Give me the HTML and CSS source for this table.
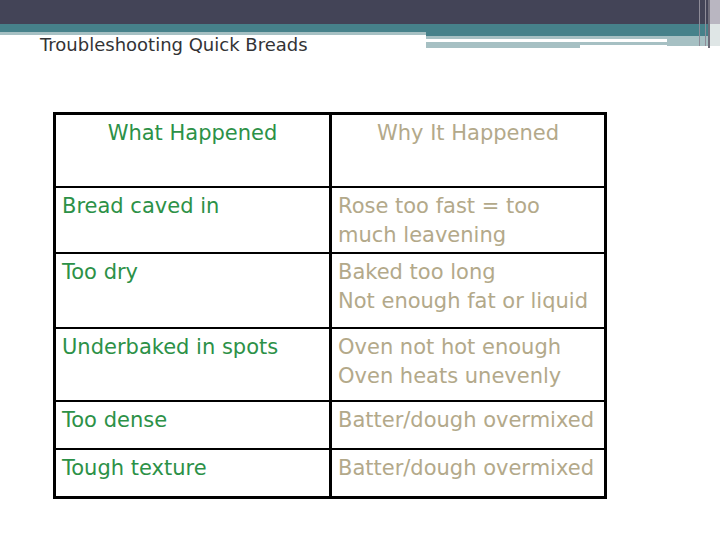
FILE: index.html
```html
<!DOCTYPE html>
<html>
<head>
<meta charset="utf-8">
<link rel="stylesheet" href="styles.css">
</head>
<body>
<div class="header">
  <h1 class="title">Troubleshooting Quick Breads</h1>
</div>
<table class="grid">
  <tr class="r-head">
    <th class="what">What Happened</th>
    <th class="why">Why It Happened</th>
  </tr>
  <tr class="r1">
    <td class="what">Bread caved in</td>
    <td class="why">Rose too fast = too<br>much leavening</td>
  </tr>
  <tr class="r2">
    <td class="what">Too dry</td>
    <td class="why">Baked too long<br>Not enough fat or liquid</td>
  </tr>
  <tr class="r3">
    <td class="what">Underbaked in spots</td>
    <td class="why">Oven not hot enough<br>Oven heats unevenly</td>
  </tr>
  <tr class="r4">
    <td class="what">Too dense</td>
    <td class="why">Batter/dough overmixed</td>
  </tr>
  <tr class="r5">
    <td class="what">Tough texture</td>
    <td class="why">Batter/dough overmixed</td>
  </tr>
</table>
</body>
</html>
```
FILE: styles.css
```css
html, body {
  margin: 0;
  padding: 0;
  background: #ffffff;
}
body {
  width: 720px;
  height: 540px;
  overflow: hidden;
  font-family: "DejaVu Sans", sans-serif;
}
.header {
  height: 60px;
  background:
    linear-gradient(#b9b6c1, #b9b6c1) 710px 0 / 10px 24px no-repeat,
    linear-gradient(#dfe6e6, #dfe6e6) 710px 24px / 10px 22px no-repeat,
    linear-gradient(#8e8c98, #8e8c98) 699px 0 / 1px 46px no-repeat,
    linear-gradient(#8e8c98, #8e8c98) 705px 0 / 1px 46px no-repeat,
    linear-gradient(#6f6d7a, #6f6d7a) 708px 0 / 2px 48px no-repeat,
    linear-gradient(#434457, #434457) 0 0 / 710px 24px no-repeat,
    linear-gradient(#46818a, #46818a) 0 24px / 710px 8px no-repeat,
    linear-gradient(#46818a, #46818a) 426px 32px / 284px 4px no-repeat,
    linear-gradient(#a6c0c3, #a6c0c3) 0 32px / 426px 3px no-repeat,
    linear-gradient(#a6c0c3, #a6c0c3) 426px 36px / 241px 3px no-repeat,
    linear-gradient(#a6c0c3, #a6c0c3) 667px 36px / 43px 10px no-repeat,
    linear-gradient(#a6c0c3, #a6c0c3) 426px 42px / 154px 6px no-repeat,
    linear-gradient(#a6c0c3, #a6c0c3) 580px 42px / 87px 3px no-repeat,
    #ffffff;
}
.title {
  margin: 0;
  padding: 34px 0 0 40px;
  font-family: "DejaVu Sans", sans-serif;
  font-weight: normal;
  font-size: 18px;
  line-height: 22px;
  color: #333335;
}
.grid {
  margin: 52px 0 0 53px;
  width: 554px;
  border-collapse: collapse;
  border: 3px solid #000;
  table-layout: fixed;
  font-size: 21px;
  line-height: 29px;
}
.grid th, .grid td {
  border-top: 2px solid #000;
  border-bottom: 2px solid #000;
  padding: 4px 6px 0 6px;
  vertical-align: top;
  text-align: left;
  font-weight: normal;
}
.grid th {
  text-align: center;
  padding-top: 4px;
}
.grid .what {
  width: 261px;
  border-right: 3px solid #000;
  color: #2c9147;
}
.grid .why {
  color: #b3a98a;
}
.r-head { height: 73px; }
.r1 { height: 66px; }
.r2 { height: 75px; }
.r3 { height: 73px; }
.r4 { height: 48px; }
.r5 { height: 49px; }
```
